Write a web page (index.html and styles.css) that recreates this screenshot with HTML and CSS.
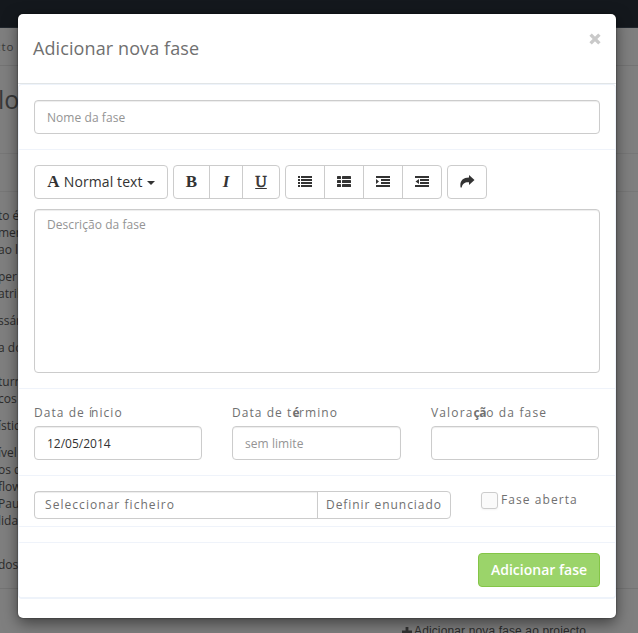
FILE: index.html
```html
<!DOCTYPE html>
<html lang="pt">
<head>
<meta charset="utf-8">
<title>Adicionar nova fase</title>
<link rel="stylesheet" href="styles.css">
</head>
<body>
<div class="page">
  <div class="navbar"></div>
  <div class="crumb">cto</div>
  <h1 class="heading">lo</h1>
  <div class="band"></div>
  <div class="article">
    <p>to é<br>men<br>ao l</p>
    <p>per<br>atrib</p>
    <p>ssár</p>
    <p>a do<br><br>turn<br>cos</p>
    <p>ístic</p>
    <p>ível<br>os d<br>flow<br>Paul<br>lidad</p>
    <p class="last">dos</p>
  </div>
  <div class="page-foot"><svg width="10" height="10" viewBox="0 0 10 10"><path d="M3.6 0h2.8v3.6H10v2.8H6.4V10H3.6V6.4H0V3.6h3.6z"/></svg><span>Adicionar nova fase ao projecto</span></div>
</div>
<div class="modal">
  <div class="modal-header">
    <h2>Adicionar nova fase</h2>
    <button class="close" aria-label="Fechar"><svg width="12" height="12" viewBox="0 0 12 12"><path d="M1.600 1.600l8.800 8.800M10.400 1.600l-8.800 8.800"/></svg></button>
  </div>
  <form class="form">
    <div class="row"><input class="control name" placeholder="Nome da fase"></div>
    <div class="row">
      <div class="toolbar">
        <div class="group"><button type="button" class="style"><b class="serif">A</b><span>Normal text</span><i class="caret"></i></button></div>
        <div class="group text-tools"><button type="button"><b class="serif">B</b></button><button type="button"><b class="serif italic">I</b></button><button type="button"><b class="serif under">U</b></button></div>
        <div class="group icons">
          <button type="button"><svg width="14" height="11" viewBox="0 0 14 11"><path d="M0 0h2v2H0zM3 0h11v2H3zM0 3h2v2H0zM3 3h11v2H3zM0 6h2v2H0zM3 6h11v2H3zM0 9h2v2H0zM3 9h11v2H3z"/></svg></button>
          <button type="button"><svg width="14" height="11" viewBox="0 0 14 11"><rect width="4" height="3" rx=".6"/><rect x="5" width="9" height="3" rx=".6"/><rect y="4" width="4" height="3" rx=".6"/><rect x="5" y="4" width="9" height="3" rx=".6"/><rect y="8" width="4" height="3" rx=".6"/><rect x="5" y="8" width="9" height="3" rx=".6"/></svg></button>
          <button type="button"><svg width="14" height="11" viewBox="0 0 14 11"><path d="M0 0h14v2H0zM5 3h9v2H5zM5 6h9v2H5zM0 9h14v2H0zM0 3l3 2.500L0 8z"/></svg></button>
          <button type="button"><svg width="14" height="11" viewBox="0 0 14 11"><path d="M0 0h14v2H0zM5 3h9v2H5zM5 6h9v2H5zM0 9h14v2H0zM4 3L.5 5.500 4 8z"/></svg></button>
        </div>
        <div class="group icons"><button type="button"><svg width="15" height="13" viewBox="0 0 15 13"><path d="M9 0l5.500 5L9 10V7.200C5.500 6.800 2.500 8 1.700 12.500H.6C-.5 6.500 2.500 2.600 9 2.600z"/></svg></button></div>
      </div>
      <textarea class="control" placeholder="Descrição da fase"></textarea>
    </div>
    <div class="row fields">
      <label><span class="caption">Data de <span class="tight">í</span>nicio</span><input class="control" value="12/05/2014"></label>
      <label><span class="caption">Data de t<span class="heavy">é</span>rmino</span><input class="control" placeholder="sem limite"></label>
      <label><span class="caption wide">Valora<span class="heavy">çã</span>o da fase</span><input class="control"></label>
    </div>
    <div class="row file-row">
      <div class="file"><span class="file-name">Seleccionar ficheiro</span><span class="file-action">Definir enunciado</span></div>
      <label class="check"><span class="box"></span><span>Fase aberta</span></label>
    </div>
    <div class="row spacer"></div>
    <div class="actions"><button type="button" class="submit">Adicionar fase</button></div>
  </form>
</div>
</body>
</html>
```
FILE: styles.css
```css
* { box-sizing: border-box; }
body { margin: 0; width: 638px; height: 633px; overflow: hidden; position: relative; background: #7f7f7f; font-family: "Open Sans", sans-serif; font-size: 12px; color: #333; }
button, input, textarea { font: inherit; color: inherit; margin: 0; }
button { background: none; border: 0; padding: 0; }
svg { display: block; fill: #333; }

.page { height: 633px; overflow: hidden; color: #2c2c2c; white-space: nowrap; display: flex; flex-direction: column; }
.navbar { height: 28px; background: #14181d; border-bottom: 1px solid #20262d; flex: none; }
.crumb { height: 38px; line-height: 38px; border-bottom: 1px solid #747474; letter-spacing: 1px; text-indent: -5px; flex: none; font-size: 11.5px; color: #3a3a3a; }
.heading { margin: 0 0 0 -2px; height: 87px; line-height: 66px; font-size: 25px; font-weight: 400; color: #393939; flex: none; }
.band { height: 39px; border-top: 1px solid #777; border-bottom: 1px solid #777; flex: none; }
.article { height: 397px; padding-top: 15px; line-height: 17px; margin-left: -2px; border-bottom: 1px solid #747474; flex: none; }
.article p { margin: 0 0 10px; }
.article .last { padding-top: 17px; }
.page-foot { flex: none; margin: 34px 0 0 402px; height: 17px; display: flex; align-items: center; gap: 2px; font: 12px/17px "Liberation Sans", sans-serif; letter-spacing: .13px; }

.modal { position: absolute; left: 18px; top: 14px; width: 598px; height: 604px; background: #fff; border-radius: 5px; box-shadow: 0 5px 15px rgba(0,0,0,.5), 0 0 2px rgba(0,0,0,.6); }
.modal-header { height: 70px; padding: 0 15px; border-bottom: 1px solid #e1e5e7; display: flex; justify-content: space-between; }
.modal-header h2 { margin: 0; font-size: 18px; font-weight: 400; line-height: 68px; color: #707070; letter-spacing: .1px; }
.close { align-self: flex-start; margin-top: 19px; }
.close path { stroke: #c9c9c9; stroke-width: 3.4; fill: none; }
.form { border: 1px solid #eef3fa; border-bottom-width: 2px; border-radius: 4px; height: 515px; }
.row { padding: 15px; border-bottom: 1px solid #eff3fa; }
.control { display: block; width: 100%; height: 34px; border: 1px solid #ccc; border-radius: 4px; padding: 6px 12px; background: #fff; box-shadow: inset 0 1px 1px rgba(0,0,0,.075); outline: 0; }
.control::placeholder { color: #949494; opacity: 1; letter-spacing: .06px; }
textarea.control { height: 164px; margin-top: 10px; resize: none; line-height: 17px; }
.toolbar { display: flex; gap: 5px; }
.group { display: flex; height: 34px; border: 1px solid #ccc; border-radius: 4px; }
.group button { display: flex; align-items: center; justify-content: center; padding-bottom: 1px; }
.group button + button { border-left: 1px solid #ccc; }
.style { width: 132px; gap: 4px; font-size: 14px; letter-spacing: .1px; }
.serif { font: bold 17px/18px "Liberation Serif", serif; }
.italic { font-style: italic; }
.under { font-size: 16px; text-decoration: underline; font-weight: 400; -webkit-text-stroke: .6px #333; }
.caret { border: 4px solid transparent; border-top-color: #333; border-bottom: 0; margin-top: 2px; }
.text-tools button { width: 35px; }
.text-tools button + button { width: 33px; }
.text-tools button:last-child { width: 37px; }
.icons button { width: 38px; }
.icons button + button { width: 39px; }
.fields { display: grid; grid-template-columns: 168px 169px 168px; column-gap: 30px; }
.caption { display: block; height: 22px; line-height: 17px; white-space: nowrap; letter-spacing: 1.05px; color: #707070; }
.wide { letter-spacing: 1.15px; }
.tight { letter-spacing: -1px; }
.heavy { font-weight: 700; letter-spacing: -.4px; }
.file-row { padding-bottom: 7px; display: flex; }
.file { width: 417px; height: 28px; border: 1px solid #ccc; border-radius: 4px; display: flex; line-height: 26px; letter-spacing: 1.05px; color: #707070; white-space: nowrap; }
.file-name { width: 282px; padding-left: 10px; box-shadow: inset 0 1px 1px rgba(0,0,0,.075); }
.file-action { border-left: 1px solid #ccc; padding-left: 8px; letter-spacing: .95px; }
.check { display: flex; margin: 1px 0 0 30px; gap: 3px; line-height: 16px; letter-spacing: 1.07px; color: #707070; white-space: nowrap; }
.box { width: 17px; height: 17px; border: 1px solid #ccc; border-radius: 3px; background: #fafafa; box-shadow: 0 1px 2px rgba(0,0,0,.05); }
.spacer { padding: 0; height: 16px; }
.actions { padding: 10px 15px; display: flex; justify-content: flex-end; }
.submit { width: 122px; height: 34px; border: 1px solid #84c547; border-radius: 4px; background: #9bd46a; color: #fff; font-size: 14px; font-weight: 600; padding-bottom: 2px; }
```
